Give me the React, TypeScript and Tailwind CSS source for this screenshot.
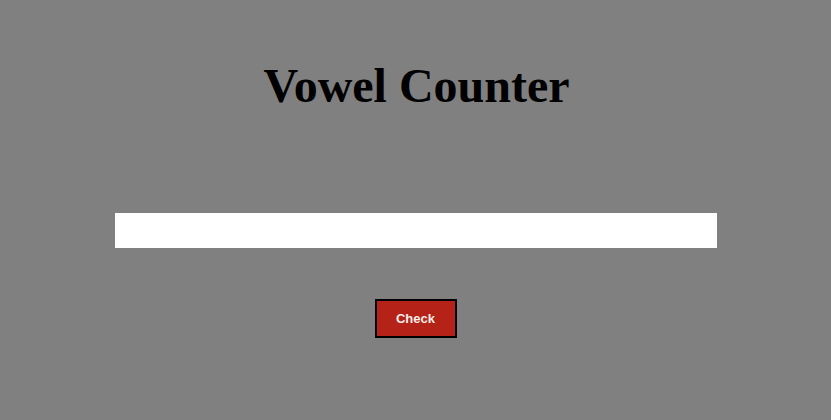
export default function App() {
  return (
    <main className="min-h-[420px] w-full bg-[#808080] flex flex-col items-center pt-[58px]">
      <h1 className="font-['Liberation_Serif',serif] font-bold text-[48px] leading-[56px] text-black pl-[2px]">Vowel Counter</h1>
      <input type="text" className="mt-[99px] w-[602px] h-[35px] bg-white border-0 outline-none px-2 font-['Liberation_Sans',sans-serif] text-base" />
      <button className="mt-[51px] w-[82px] h-[39px] bg-[#b52318] border-2 border-black text-[#f8eee8] font-bold text-[13px] font-['Liberation_Sans',sans-serif]">Check</button>
    </main>
  );
}
